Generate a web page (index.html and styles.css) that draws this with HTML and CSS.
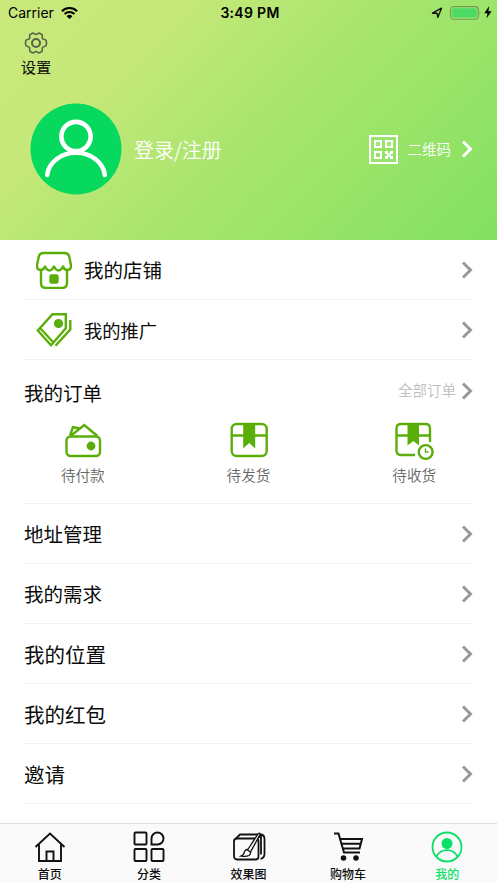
FILE: index.html
```html
<!DOCTYPE html>
<html lang="zh-CN">
<head>
<meta charset="utf-8">
<title>我的</title>
<link rel="stylesheet" href="styles.css">
</head>
<body>
<svg class="defs" width="0" height="0">
  <symbol id="chev" viewBox="0 0 12 18"><path d="M2 1.500l7.500 7.500L2 16.500" fill="none" stroke="currentColor" stroke-width="3"/></symbol>
</svg>
<div class="app">
  <header class="hero">
    <div class="status">
      <div class="left"><span class="carrier">Carrier</span>
        <svg width="17" height="12" viewBox="0 0 17 12"><g fill="none" stroke="#000" stroke-width="2.1"><path d="M.9 4.2a10.8 10.8 0 0 1 15.2 0"/><path d="M3.6 7a7 7 0 0 1 9.8 0"/></g><path d="M5.6 9.2a4.2 4.2 0 0 1 5.8 0L8.5 12z"/></svg>
      </div>
      <span class="time">3:49 PM</span>
      <div class="right">
        <svg width="12" height="12" viewBox="0 0 11 12"><path d="M1 6.2L10 1.2 6.3 10.4 5.6 6.3z" fill="none" stroke="#111" stroke-width="1.4" stroke-linejoin="round"/></svg>
        <svg class="battery" width="32" height="14" viewBox="0 0 32 14"><rect x=".6" y=".6" width="27.6" height="12.6" rx="3.2" fill="none" stroke="#6d9d51" stroke-width="1.1"/><rect x="2.2" y="2.2" width="24.4" height="9.4" rx="1.8" fill="#4cd964"/><path d="M29.6 4.7q1.6 2.3 0 4.6z" fill="#6d9d51"/></svg>
        <svg width="8" height="13" viewBox="0 0 8 13"><path d="M5.2 0L.3 7.2h3.2L2.4 12.6 7.6 5.2H4.4z"/></svg>
      </div>
    </div>
    <div class="settings">
      <svg width="24" height="22" viewBox="0 0 24 22" fill="none" stroke="#57634a" stroke-width="1.6" stroke-linejoin="round"><path d="M8.4 1.2C10 .6 10.300 2.500 12 2.500S14 .6 15.600 1.200L18 2.600C19 3.800 17.600 4.900 18.400 6.300S20.900 7.200 22 8.300Q23 11 22 13.700C20.900 14.800 19.200 14.300 18.400 15.700S19 18.200 18 19.400L15.600 20.800C14 21.400 13.700 19.500 12 19.500S10 21.400 8.400 20.800L6 19.400C5 18.200 6.400 17.100 5.600 15.700S3.100 14.800 2 13.700Q1 11 2 8.300C3.100 7.200 4.800 7.700 5.600 6.300S5 3.800 6 2.600z"/><circle cx="12" cy="11" r="4" stroke-width="2"/></svg>
      <span>设置</span>
    </div>
    <div class="profile">
      <svg width="92" height="92" viewBox="0 0 92 92"><circle cx="46" cy="46" r="45.5" fill="#07d95f"/><g fill="none" stroke="#fff" stroke-width="4.600" stroke-linecap="round"><circle cx="46" cy="33.500" r="14.600"/><path d="M17.200 72a28.900 24.200 0 0 1 57.600 0"/></g></svg>
      <span class="login">登录/注册</span>
      <svg class="qr" width="29" height="29" viewBox="0 0 29 29"><g fill="none" stroke="#fff" stroke-width="2"><path d="M1 1h27v27H1z"/><path d="M6 6h6v6H6zM17 6h6v6h-6zM6 17h6v6H6z"/></g><path fill="#fff" d="M16 16h3v2h2v-2h3v3h-2v2h2v3h-3v-2h-2v2h-3v-3h2v-2h-2zM8.500 8.500h1v1h-1zM19.500 8.500h1v1h-1z"/></svg>
      <span class="code">二维码</span>
      <svg class="arrow" width="12" height="18"><use href="#chev"/></svg>
    </div>
  </header>
  <main>
    <div class="row feature">
      <svg class="ico" width="36" height="38" viewBox="0 0 36 38" fill="none" stroke="#5aae09" stroke-width="2.400" stroke-linejoin="round"><path d="M7.500 2h21q4 0 4.800 4L35 14q.3 5-3.500 5-3.300 0-4.500-3.500Q25 19.500 22.500 19.500T18 15.500Q16 19.500 13.500 19.500T9 15.500Q7.800 19 4.500 19 .7 19 1 14L2.700 6Q3.500 2 7.500 2z"/><path d="M5 19v13q0 5 5 5h16q5 0 5-5V19"/><rect x="14.500" y="24.500" width="7" height="7" rx="1" fill="#5aae09"/></svg>
      <span class="t195">我的店铺</span><svg class="arrow" width="12" height="18"><use href="#chev"/></svg>
    </div>
    <div class="row feature">
      <svg class="ico" width="36" height="36" viewBox="0 0 36 36" fill="none" stroke="#5aae09" stroke-width="2.400"><path d="M1.800 18.500L16.500 2.200h13.300v14L15 33.200zM4 16l13.500 14.500M34.300 8v9.500L19.500 33.800"/><circle cx="22.500" cy="11.500" r="3.400" fill="#5aae09"/></svg>
      <span class="t185">我的推广</span><svg class="arrow" width="12" height="18"><use href="#chev"/></svg>
    </div>
    <section class="orders">
      <div class="head"><span class="t195">我的订单</span><span class="all">全部订单</span><svg class="arrow" width="12" height="18"><use href="#chev"/></svg></div>
      <div class="states">
        <div><svg width="40" height="40" viewBox="0 0 40 40" fill="none" stroke="#5aae09" stroke-width="2.400"><rect x="3.500" y="15.500" width="33.500" height="19.500" rx="4"/><path d="M7.500 15L21.200 4 34.500 15M7 14.500L10 6.200l6 1"/><circle cx="28" cy="25" r="3.200" fill="#5aae09"/></svg><span>待付款</span></div>
        <div><svg width="40" height="40" viewBox="0 0 40 40" fill="none" stroke="#5aae09" stroke-width="2.400"><rect x="2.700" y="3" width="35" height="32" rx="5"/><path d="M3 14.500h12M26 14.500h12"/><path d="M14.200 4h12v23.500l-6-5.500-6 5.500z" fill="#5aae09" stroke="none"/></svg><span>待发货</span></div>
        <div><svg width="40" height="40" viewBox="0 0 40 40" fill="none" stroke="#5aae09" stroke-width="2.400"><path d="M21 34H7q-4.500 0-4.500-4.500V7.500Q2.500 3 7 3h24.500Q36 3 36 7.500V21M3 14.500h11M25 14.500h11"/><path d="M13.500 4h11.500v20.500l-5.700-4.500-5.800 4.500z" fill="#5aae09" stroke="none"/><circle cx="31.700" cy="31" r="6.900"/><path d="M31.500 27.500v3.500h3" stroke-width="1.300"/></svg><span>待收货</span></div>
      </div>
    </section>
    <div class="row"><span class="t195">地址管理</span><svg class="arrow" width="12" height="18"><use href="#chev"/></svg></div>
    <div class="row"><span class="t195">我的需求</span><svg class="arrow" width="12" height="18"><use href="#chev"/></svg></div>
    <div class="row"><span class="t205">我的位置</span><svg class="arrow" width="12" height="18"><use href="#chev"/></svg></div>
    <div class="row"><span class="t205">我的红包</span><svg class="arrow" width="12" height="18"><use href="#chev"/></svg></div>
    <div class="row"><span class="t205">邀请</span><svg class="arrow" width="12" height="18"><use href="#chev"/></svg></div>
  </main>
  <nav class="tabs">
    <div><svg width="34" height="34" viewBox="0 0 34 34" fill="none" stroke="#111" stroke-width="1.900"><path d="M2.500 17L17 3.500 31.500 17M6 14.500V31h22V14.500M13.500 31v-9.500h7V31"/></svg><span>首页</span></div>
    <div><svg width="34" height="34" viewBox="0 0 34 34" fill="none" stroke="#111" stroke-width="1.900"><rect x="2.500" y="2.500" width="12" height="12" rx="1"/><rect x="2.500" y="19" width="12" height="12" rx="1"/><rect x="19.500" y="19" width="12" height="12" rx="1"/><path d="M19.500 14.500V8.500a6 6 0 1 1 6 6z"/></svg><span>分类</span></div>
    <div><svg width="34" height="34" viewBox="0 0 34 34" fill="none" stroke="#111" stroke-width="1.800"><rect x="2" y="8.500" width="24.500" height="21" rx="3"/><path d="M4 8.500l4-4h20q4.500 0 4.500 4.500v14.500q0 4.500-4 5.500M26 8l3-2.500v19"/><path d="M9 26q3-1 3.500-4.500 2-3.500 5-1 2.500 2.500-.5 5-3 1.500-8 .5z" stroke-width="1.300"/><path d="M15.500 20L26 4q2-2 2 .5L18.500 22z" stroke-width="1.300" fill="#fafafa"/></svg><span>效果图</span></div>
    <div><svg width="34" height="34" viewBox="0 0 34 34" fill="none" stroke="#111" stroke-width="2"><path d="M3 3.500h4.500l5.500 19h16M8.800 9h22.200l-2.500 9.500H12M10 13.800h19"/><circle cx="12.500" cy="28" r="1.800" fill="#111"/><circle cx="25" cy="28" r="1.800" fill="#111"/></svg><span>购物车</span></div>
    <div class="active"><svg width="34" height="34" viewBox="0 0 34 34" fill="none" stroke="#0be168" stroke-width="1.800"><circle cx="17" cy="17" r="14.500"/><circle cx="17" cy="13.500" r="4.600" fill="#0be168"/><path d="M6.500 26.500a11.800 11.800 0 0 1 21 0"/></svg><span>我的</span></div>
  </nav>
</div>
</body>
</html>
```
FILE: styles.css
```css
* { box-sizing: border-box; }
body { margin: 0; background: #fff; color: #0b0b0b; font-family: "Noto Sans CJK SC", sans-serif; }
svg { display: block; flex: none; }
.defs { position: absolute; }
.app { width: 497px; height: 883px; display: flex; flex-direction: column; overflow: hidden; }
.hero { height: 240px; background: linear-gradient(135deg, #c9e97b 0%, #c5e879 25%, #a9e56e 52%, #82e161 100%); display: flex; flex-direction: column; }
.status { height: 26px; padding: 0 5px 1px 8px; display: grid; grid-template-columns: 1fr auto 1fr; align-items: center; color: #000; font-family: Inter, sans-serif; font-size: 14px; }
.left, .right { display: flex; align-items: center; }
.left { gap: 7px; }
.right { justify-content: flex-end; }
.battery { margin: 0 2px 0 7px; }
.time { font-weight: 600; font-size: 14px; letter-spacing: .3px; }
.settings { width: 72px; height: 64px; padding-top: 6px; display: flex; flex-direction: column; align-items: center; font-size: 15.3px; line-height: 22px; gap: 1px; }
.profile { height: 92px; margin-top: 13px; padding: 0 24px 0 30px; display: flex; align-items: center; color: #fff; font-weight: 350; }
.login { margin-left: 12px; font-size: 20px; }
.qr { margin-left: auto; }
.code { margin: 0 10px; font-size: 14.5px; padding-bottom: 1px; }
.arrow { color: #999; margin-left: auto; }
.profile .arrow { color: #fff; margin-left: 0; }
main { flex: 1; padding: 0 24px; }
.row { height: 60px; display: flex; align-items: center; border-bottom: 1px solid #f1f1f1; padding-top: 1px; line-height: 30px; }
.row span { padding-bottom: 1px; }
.ico { margin: 0 12px; }
.t185 { font-size: 18.3px; }
.t195 { font-size: 19.5px; }
.t205 { font-size: 20.5px; }
.orders { height: 144px; border-bottom: 1px solid #f1f1f1; padding-top: 17px; }
.head { height: 30px; display: flex; align-items: center; }
.all { margin: -5px 5px 0 auto; color: #bdbdbd; font-size: 14.5px; font-weight: 350; }
.head .arrow { margin: -2px 0 0; }
.states { display: flex; justify-content: space-between; margin: 14px -24px 0; }
.states div { width: 165.6px; display: flex; flex-direction: column; align-items: center; color: #666; font-size: 14.6px; line-height: 24px; gap: 2px; font-weight: 350; }
.tabs { height: 60px; border-top: 1px solid #ddd; background: #fafafa; display: flex; padding-top: 6px; }
.tabs div { flex: 1; display: flex; flex-direction: column; align-items: center; font-size: 12px; line-height: 18px; font-weight: 500; gap: 1px; }
.tabs .active { color: #0be168; }
```
